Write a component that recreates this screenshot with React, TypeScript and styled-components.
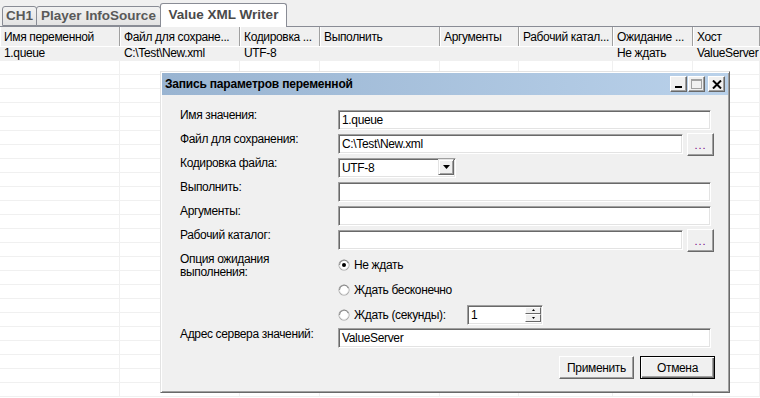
import React from "react";
import styled, { createGlobalStyle } from "styled-components";

const GlobalStyle = createGlobalStyle`
  html, body {
    margin: 0;
    padding: 0;
    background: #fff;
  }
  body {
    font-family: "Liberation Sans", Arial, sans-serif;
    font-size: 12px;
    letter-spacing: -0.35px;
    color: #000;
  }
`;

const Screen = styled.div`
  position: relative;
  width: 760px;
  height: 398px;
  overflow: hidden;
  background: #fff;
`;

/* ---------- tabs ---------- */

const TabStrip = styled.div`
  display: flex;
  align-items: flex-end;
  box-sizing: border-box;
  height: 27px;
  padding-left: 2px;
  background: #f0f0f0;
  border-bottom: 1px solid #898c95;
`;

const Tab = styled.div<{ $active?: boolean; $width: number }>`
  box-sizing: border-box;
  width: ${(p) => p.$width}px;
  height: ${(p) => (p.$active ? 24 : 20)}px;
  margin-bottom: ${(p) => (p.$active ? -1 : 0)}px;
  margin-right: -1px;
  position: relative;
  z-index: ${(p) => (p.$active ? 1 : 0)};
  display: flex;
  align-items: center;
  justify-content: center;
  padding-bottom: ${(p) => (p.$active ? 3 : 1)}px;
  border: 1px solid #898c95;
  border-bottom: ${(p) => (p.$active ? "none" : "1px solid #898c95")};
  border-radius: 3px 3px 0 0;
  background: ${(p) =>
    p.$active ? "#fff" : "linear-gradient(#f2f2f2, #e3e3e3)"};
  color: ${(p) => (p.$active ? "#4a4a4a" : "#595959")};
  font-weight: bold;
  font-size: 13.5px;
  letter-spacing: 0;
  white-space: nowrap;
`;

/* ---------- grid ---------- */

const columns = [120, 120, 80, 120, 79, 94, 80, 67];

const HeaderRow = styled.div`
  display: flex;
  box-sizing: border-box;
  height: 20px;
  background: #f0f0f0;
  border-bottom: 1px solid #fff;
`;

const HeaderCell = styled.div<{ $width: number }>`
  box-sizing: border-box;
  flex: none;
  width: ${(p) => p.$width}px;
  padding: 3px 0 0 4px;
  border-right: 1px solid #a0a0a0;
  box-shadow: inset 1px 0 #fff;
  white-space: nowrap;
  overflow: hidden;
`;

const BodyRow = styled.div<{ $filled?: boolean }>`
  display: flex;
  box-sizing: border-box;
  height: 14px;
  background: ${(p) => (p.$filled ? "#f0f0f0" : "#fff")};
  border-bottom: 1px solid #f0f0f0;
`;

const BodyCell = styled.div<{ $width: number }>`
  box-sizing: border-box;
  flex: none;
  width: ${(p) => p.$width}px;
  padding-left: 4px;
  line-height: 13px;
  border-right: 1px solid #f0f0f0;
  white-space: nowrap;
  overflow: hidden;
`;

/* ---------- dialog ---------- */

const Dialog = styled.div`
  position: absolute;
  left: 160px;
  top: 71px;
  box-sizing: border-box;
  width: 570px;
  height: 322px;
  padding: 1px;
  background: #f0f0f0;
  border: 1px solid;
  border-color: #e3e3e3 #696969 #696969 #e3e3e3;
  box-shadow: inset 1px 1px #fff, inset -1px -1px #a0a0a0;
  display: flex;
  flex-direction: column;
`;

const TitleBar = styled.div`
  display: flex;
  align-items: center;
  height: 22px;
  padding: 0 3px 0 3px;
  background: linear-gradient(90deg, #99b4d1, #b9d1ea);
`;

const Title = styled.div`
  flex: 1;
  font-weight: bold;
  font-size: 12px;
  letter-spacing: -0.2px;
`;

const CaptionButton = styled.div<{ $gap?: number }>`
  box-sizing: border-box;
  width: 17px;
  height: 16px;
  margin-left: ${(p) => p.$gap ?? 0}px;
  display: flex;
  align-items: center;
  justify-content: center;
  background: #f0f0f0;
  border: 1px solid;
  border-color: #fff #696969 #696969 #fff;
  box-shadow: inset -1px -1px #a0a0a0;
`;

const Body = styled.div`
  flex: 1;
  display: flex;
  flex-direction: column;
  padding: 13px 17px 0 18px;
`;

const FormRow = styled.div<{ $height: number }>`
  display: grid;
  grid-template-columns: 158px 1fr;
  height: ${(p) => p.$height}px;
`;

const Label = styled.div`
  padding-top: 1px;
  line-height: 13px;
`;

const FieldCell = styled.div<{ $overhang?: number }>`
  display: flex;
  align-items: center;
  gap: 4px;
  margin-right: ${(p) => -(p.$overhang ?? 0)}px;
`;

const TextBox = styled.div<{ $width?: number }>`
  box-sizing: border-box;
  height: 20px;
  ${(p) => (p.$width ? `width: ${p.$width}px; flex: none;` : "flex: 1;")}
  padding: 2px 3px;
  line-height: 14px;
  background: #fff;
  border: 1px solid;
  border-color: #a0a0a0 #fff #fff #a0a0a0;
  box-shadow: inset 1px 1px #696969, inset -1px -1px #e3e3e3;
  white-space: nowrap;
  overflow: hidden;
`;

const ComboBox = styled(TextBox)`
  display: flex;
  justify-content: space-between;
  padding: 2px 2px 2px 3px;
`;

const RaisedButton = styled.div<{ $w: number; $h: number; $default?: boolean }>`
  box-sizing: border-box;
  flex: none;
  width: ${(p) => p.$w}px;
  height: ${(p) => p.$h}px;
  display: flex;
  align-items: center;
  justify-content: center;
  background: #f0f0f0;
  border: 1px solid;
  border-color: ${(p) =>
    p.$default ? "#000" : "#fff #696969 #696969 #fff"};
  box-shadow: ${(p) =>
    p.$default
      ? "inset 1px 1px #fff, inset -1px -1px #696969, inset -2px -2px #a0a0a0"
      : "inset -1px -1px #a0a0a0"};
  white-space: nowrap;
`;

const DropArrow = styled.div`
  box-sizing: border-box;
  width: 16px;
  height: 16px;
  margin-top: -2px;
  margin-right: -1px;
  display: flex;
  align-items: center;
  justify-content: center;
  background: #f0f0f0;
  border: 1px solid;
  border-color: #e3e3e3 #696969 #696969 #e3e3e3;
  box-shadow: inset 1px 1px #fff, inset -1px -1px #a0a0a0;
`;

const Dots = styled.span`
  color: #700080;
  font-size: 11px;
  letter-spacing: 1px;
  margin-top: 2px;
`;

const RadioGroup = styled.div`
  display: flex;
  flex-direction: column;
`;

const RadioRow = styled.div`
  display: grid;
  grid-template-columns: 129px 76px;
  align-items: center;
  height: 25px;
`;

const RadioOption = styled.div`
  display: flex;
  align-items: center;
  gap: 4px;
`;

const Spin = styled(TextBox)`
  display: flex;
  justify-content: space-between;
  padding: 2px 1px 2px 3px;
`;

const SpinButtons = styled.div`
  display: flex;
  flex-direction: column;
  margin-top: -1px;
`;

const SpinPart = styled.div`
  box-sizing: border-box;
  width: 16px;
  height: 8px;
  display: flex;
  align-items: center;
  justify-content: center;
  background: #f0f0f0;
  border: 1px solid;
  border-color: #fff #696969 #696969 #fff;
`;

const ButtonRow = styled.div`
  display: flex;
  justify-content: flex-end;
  gap: 6px;
  margin: 7px -4px 0 0;
`;

const Radio = ({ checked }: { checked?: boolean }) => (
  <svg width="12" height="12" viewBox="0 0 12 12">
    <circle cx="6" cy="6" r="5.5" fill="#a0a0a0" />
    <circle cx="6" cy="6" r="4.5" fill="#fff" stroke="#e3e3e3" />
    <path d="M1.5 6 A4.5 4.5 0 0 1 10.2 4.2" fill="none" stroke="#888" />
    {checked && <circle cx="6" cy="6" r="2" fill="#000" />}
  </svg>
);

const Triangle = ({ down, size }: { down?: boolean; size: number }) => (
  <svg width={size * 2 - 1} height={size} viewBox={`0 0 ${size * 2 - 1} ${size}`}>
    <polygon
      points={
        down
          ? `0,0 ${size * 2 - 1},0 ${size - 0.5},${size}`
          : `0,${size} ${size * 2 - 1},${size} ${size - 0.5},0`
      }
      fill="#000"
    />
  </svg>
);

const headers = [
  "Имя переменной",
  "Файл для сохране...",
  "Кодировка ...",
  "Выполнить",
  "Аргументы",
  "Рабочий катал...",
  "Ожидание ...",
  "Хост",
];

const firstRow = ["1.queue", "C:\\Test\\New.xml", "UTF-8", "", "", "", "Не ждать", "ValueServer"];

export default function App() {
  return (
    <>
      <GlobalStyle />
      <Screen>
        <TabStrip>
          <Tab $width={35}>CH1</Tab>
          <Tab $width={125}>Player InfoSource</Tab>
          <Tab $width={127} $active>
            Value XML Writer
          </Tab>
        </TabStrip>

        <HeaderRow>
          {headers.map((h, i) => (
            <HeaderCell key={h} $width={columns[i]}>
              {h}
            </HeaderCell>
          ))}
        </HeaderRow>
        <BodyRow $filled>
          {firstRow.map((c, i) => (
            <BodyCell key={i} $width={columns[i]}>
              {c}
            </BodyCell>
          ))}
        </BodyRow>
        {Array.from({ length: 24 }).map((_, r) => (
          <BodyRow key={r}>
            {columns.map((w, i) => (
              <BodyCell key={i} $width={w} />
            ))}
          </BodyRow>
        ))}

        <Dialog>
          <TitleBar>
            <Title>Запись параметров переменной</Title>
            <CaptionButton>
              <svg width="9" height="10" viewBox="0 0 9 10">
                <rect x="1" y="7" width="7" height="2" fill="#000" />
              </svg>
            </CaptionButton>
            <CaptionButton $gap={1}>
              <svg width="11" height="10" viewBox="0 0 11 10">
                <rect x="0.5" y="0.5" width="10" height="9" fill="none" stroke="#a0a0a0" />
                <rect x="1" y="1" width="9" height="1" fill="#a0a0a0" />
              </svg>
            </CaptionButton>
            <CaptionButton $gap={3}>
              <svg width="10" height="9" viewBox="0 0 10 9">
                <path d="M1 0.5 L9 8.5 M9 0.5 L1 8.5" stroke="#000" strokeWidth="2" />
              </svg>
            </CaptionButton>
          </TitleBar>

          <Body>
            <FormRow $height={24}>
              <Label>Имя значения:</Label>
              <FieldCell>
                <TextBox>1.queue</TextBox>
              </FieldCell>
            </FormRow>
            <FormRow $height={24}>
              <Label>Файл для сохранения:</Label>
              <FieldCell $overhang={3}>
                <TextBox>C:\Test\New.xml</TextBox>
                <RaisedButton $w={27} $h={23}>
                  <Dots>...</Dots>
                </RaisedButton>
              </FieldCell>
            </FormRow>
            <FormRow $height={24}>
              <Label>Кодировка файла:</Label>
              <FieldCell>
                <ComboBox $width={118}>
                  <span>UTF-8</span>
                  <DropArrow>
                    <Triangle down size={4} />
                  </DropArrow>
                </ComboBox>
              </FieldCell>
            </FormRow>
            <FormRow $height={24}>
              <Label>Выполнить:</Label>
              <FieldCell>
                <TextBox />
              </FieldCell>
            </FormRow>
            <FormRow $height={24}>
              <Label>Аргументы:</Label>
              <FieldCell>
                <TextBox />
              </FieldCell>
            </FormRow>
            <FormRow $height={24}>
              <Label>Рабочий каталог:</Label>
              <FieldCell $overhang={3}>
                <TextBox />
                <RaisedButton $w={27} $h={23}>
                  <Dots>...</Dots>
                </RaisedButton>
              </FieldCell>
            </FormRow>
            <FormRow $height={75}>
              <Label>
                Опция ожидания
                <br />
                выполнения:
              </Label>
              <RadioGroup>
                <RadioRow>
                  <RadioOption>
                    <Radio checked />
                    Не ждать
                  </RadioOption>
                </RadioRow>
                <RadioRow>
                  <RadioOption>
                    <Radio />
                    Ждать бесконечно
                  </RadioOption>
                </RadioRow>
                <RadioRow>
                  <RadioOption>
                    <Radio />
                    Ждать (секунды):
                  </RadioOption>
                  <Spin>
                    <span>1</span>
                    <SpinButtons>
                      <SpinPart>
                        <Triangle size={2} />
                      </SpinPart>
                      <SpinPart>
                        <Triangle down size={2} />
                      </SpinPart>
                    </SpinButtons>
                  </Spin>
                </RadioRow>
              </RadioGroup>
            </FormRow>
            <FormRow $height={22}>
              <Label>Адрес сервера значений:</Label>
              <FieldCell>
                <TextBox>ValueServer</TextBox>
              </FieldCell>
            </FormRow>
            <ButtonRow>
              <RaisedButton $w={75} $h={23}>
                Применить
              </RaisedButton>
              <RaisedButton $w={75} $h={23} $default>
                Отмена
              </RaisedButton>
            </ButtonRow>
          </Body>
        </Dialog>
      </Screen>
    </>
  );
}
